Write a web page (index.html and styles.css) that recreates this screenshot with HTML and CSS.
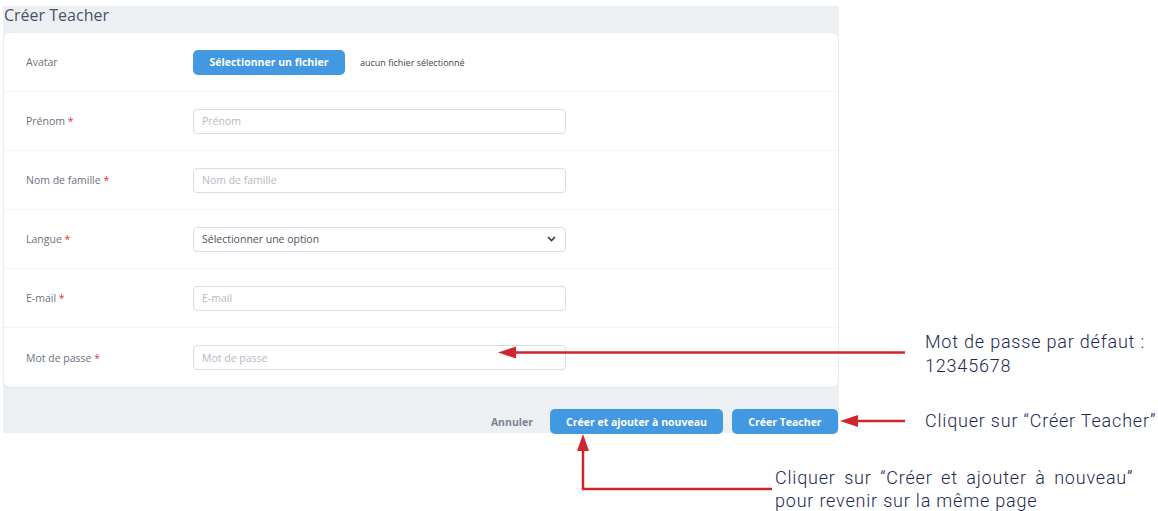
FILE: index.html
```html
<!DOCTYPE html>
<html lang="fr">

<head>
    <meta charset="UTF-8" />
    <meta name="viewport" content="width=device-width, initial-scale=1.0" />
    <title>Créer Teacher</title>
    <link rel="stylesheet" href="styles.css">
</head>

<body>
    <div class="page">
        <section class="panel">
            <h1 class="title">Créer Teacher</h1>
            <form class="card">
                <div class="row">
                    <label class="label">Avatar</label>
                    <div class="field file-field">
                        <span class="btn">Sélectionner un fichier</span>
                        <span class="file-name">aucun fichier sélectionné</span>
                    </div>
                </div>
                <div class="row">
                    <label class="label">Prénom <span class="req">*</span></label>
                    <div class="field"><input type="text" placeholder="Prénom" /></div>
                </div>
                <div class="row">
                    <label class="label">Nom de famille <span class="req">*</span></label>
                    <div class="field"><input type="text" placeholder="Nom de famille" /></div>
                </div>
                <div class="row">
                    <label class="label">Langue <span class="req">*</span></label>
                    <div class="field">
                        <div class="select">
                            <span>Sélectionner une option</span>
                            <svg width="9" height="6" viewBox="0 0 9 6"><path d="M1 1l3.5 3.5L8 1" fill="none" stroke="#2d3748" stroke-width="1.6"/></svg>
                        </div>
                    </div>
                </div>
                <div class="row">
                    <label class="label">E-mail <span class="req">*</span></label>
                    <div class="field"><input type="email" placeholder="E-mail" /></div>
                </div>
                <div class="row">
                    <label class="label">Mot de passe <span class="req">*</span></label>
                    <div class="field"><input type="password" placeholder="Mot de passe" /></div>
                </div>
            </form>
            <div class="actions">
                <span class="cancel">Annuler</span>
                <span class="btn btn-wide">Créer et ajouter à nouveau</span>
                <span class="btn btn-main">Créer Teacher</span>
            </div>
        </section>

        <!-- annotations -->
        <svg class="arrows" width="1158" height="511" viewBox="0 0 1158 511">
            <g fill="#d0262b" stroke="#d0262b" stroke-width="2.5">
                <line x1="512" y1="352.5" x2="905" y2="352.5" />
                <polygon points="498,352.5 516,346.5 516,358.5" stroke="none" />
                <line x1="854" y1="421" x2="905" y2="421" />
                <polygon points="840,421 858,415 858,427" stroke="none" />
                <polyline points="583,447 583,489 772,489" fill="none" />
                <polygon points="583,434 577,451 589,451" stroke="none" />
            </g>
        </svg>
        <p class="note note-password">Mot de passe par défaut :<br>12345678</p>
        <p class="note note-create">Cliquer sur “Créer Teacher”</p>
        <p class="note note-again"><span class="spread">Cliquer sur “Créer et ajouter à nouveau”</span><br>pour revenir sur la même page</p>
    </div>
</body>

</html>
```

FILE: styles.css
```css
* {
    margin: 0;
    padding: 0;
    box-sizing: border-box;
}

body {
    font-family: "Open Sans", "Noto Sans", sans-serif;
    background: #fff;
    width: 1158px;
    height: 511px;
    overflow: hidden;
}

.page {
    position: relative;
    width: 1158px;
    height: 511px;
    padding-top: 6px;
}

/* zone grise */
.panel {
    width: 836px;
    margin-left: 3px;
    background: #edf0f3;
    height: 427px;
}

.title {
    height: 27px;
    padding-left: 1px;
    font-size: 16px;
    font-weight: 400;
    line-height: 18px;
    color: #4a5262;
}

/* carte du formulaire */
.card {
    margin-left: 1px;
    width: 834px;
    background: #fff;
    border-radius: 6px;
    box-shadow: 0 1px 2px rgba(0, 0, 0, 0.04);
}

.row {
    display: flex;
    align-items: center;
    height: 59px;
    border-bottom: 1px solid #f3f4f6;
    padding-left: 22px;
}

.row:last-child {
    border-bottom: none;
}

.label {
    width: 167px;
    font-size: 10.5px;
    color: #6b7280;
}

.req {
    color: #e3342f;
}

.field {
    width: 373px;
}

.field input,
.select {
    width: 373px;
    height: 25px;
    border: 1px solid #d8dde4;
    border-radius: 4px;
    padding: 0 8px;
    font-family: inherit;
    font-size: 10.5px;
    color: #374151;
    outline: none;
}

.field input::placeholder {
    color: #b3bac5;
}

.select {
    display: flex;
    align-items: center;
    justify-content: space-between;
    padding-right: 9px;
    color: #4b5563;
}

.file-field {
    display: flex;
    align-items: center;
}

.file-name {
    margin-left: 15px;
    font-size: 9px;
    color: #3d4451;
}

/* boutons */
.btn {
    display: inline-flex;
    align-items: center;
    justify-content: center;
    height: 25px;
    padding: 0 16px;
    border-radius: 5px;
    background: #4299e1;
    color: #fff;
    font-size: 10.5px;
    font-weight: 700;
}

.file-field .btn {
    width: 152px;
}

.actions {
    display: flex;
    align-items: center;
    justify-content: flex-end;
    gap: 9px;
    padding-top: 22px;
    padding-right: 1px;
}

.cancel {
    margin-right: 8px;
    font-size: 10.5px;
    font-weight: 700;
    color: #7c8493;
}

.btn-wide {
    width: 173px;
}

.btn-main {
    width: 106px;
}

/* annotations */
.arrows {
    position: absolute;
    top: 0;
    left: 0;
}

.note {
    position: absolute;
    font-family: Roboto, "Liberation Sans", sans-serif;
    font-size: 18px;
    font-weight: 300;
    letter-spacing: 0.8px;
    line-height: 24px;
    color: #222755;
    white-space: nowrap;
}

.note-password {
    left: 925px;
    top: 330px;
}

.note-create {
    left: 925px;
    top: 409px;
}

.note-again {
    left: 775px;
    top: 466px;
    line-height: 23px;
}

.note-again .spread {
    word-spacing: 3.3px;
}
```
